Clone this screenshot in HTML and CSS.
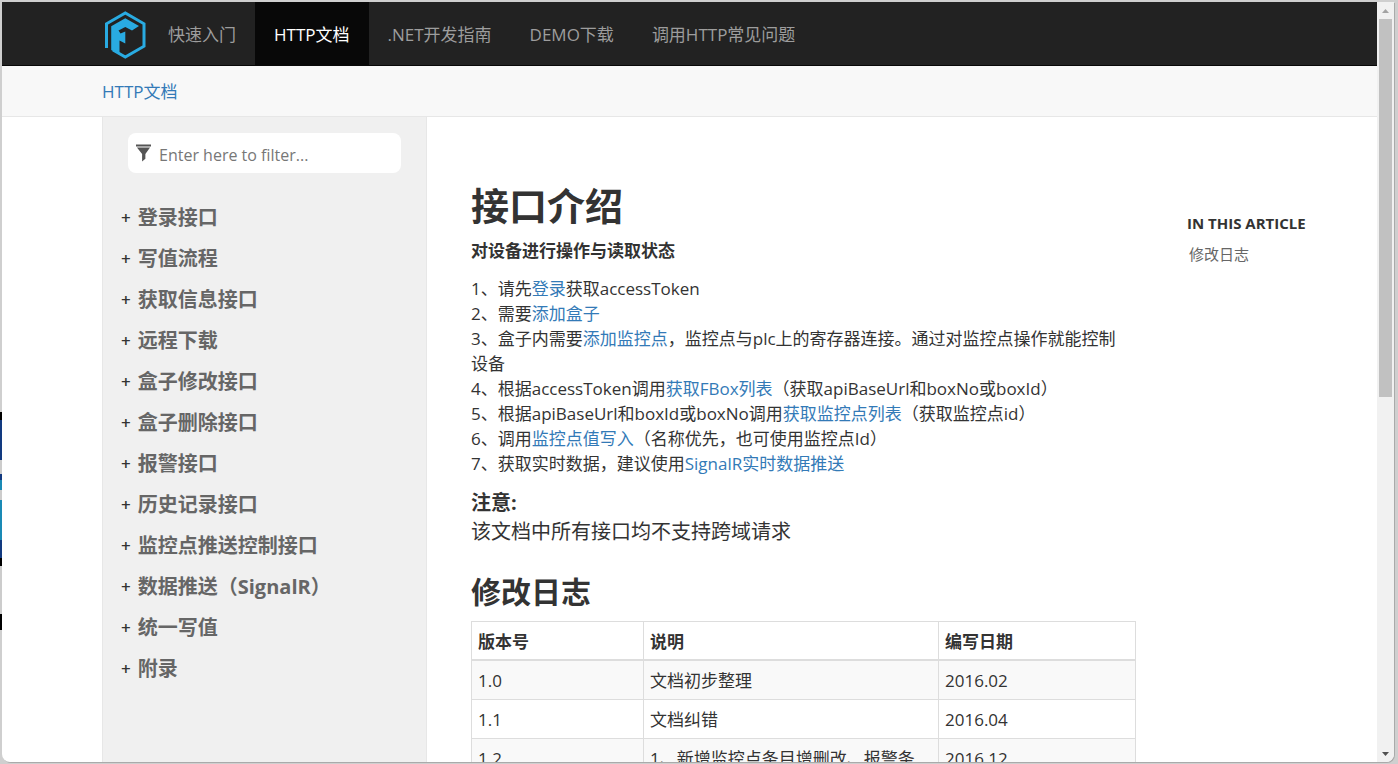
FILE: index.html
```html
<!DOCTYPE html>
<html lang="zh-CN">
<head>
<meta charset="utf-8">
<title>接口介绍</title>
<link rel="stylesheet" href="styles.css">
</head>
<body>
<div class="window">
  <div class="page">
    <header class="navbar">
      <a class="brand" href="#" aria-label="首页">
        <svg class="logo" viewBox="0 0 43 48" aria-hidden="true">
          <path d="M2.500 37V12.800L21.300 2 40 12.800V35.200L21.300 46 9 39" fill="none" stroke="#29abe2" stroke-width="3"/>
          <path d="M7.200 39V15.300L21.300 7.300 35 15 28 19.500 21.300 16 14.500 19.500 16.500 22.500 21.300 20.500V32.500L15.500 29.500V43.500Z" fill="#29abe2"/>
        </svg>
      </a>
      <nav class="menu">
        <a href="#">快速入门</a>
        <a class="active" href="#">HTTP文档</a>
        <a href="#">.NET开发指南</a>
        <a href="#">DEMO下载</a>
        <a href="#">调用HTTP常见问题</a>
      </nav>
    </header>
    <div class="breadcrumb"><a href="#">HTTP文档</a></div>
    <div class="body">
      <aside class="sidebar">
        <label class="filter">
          <svg class="funnel" viewBox="0 0 16 18" aria-label="筛选"><path d="M0 0H16V2H0ZM1 3H15L10 10V15L6.500 18V10Z" fill="#555"/></svg>
          <input type="text" placeholder="Enter here to filter...">
        </label>
        <ul class="toc">
          <li><a href="#">登录接口</a></li>
          <li><a href="#">写值流程</a></li>
          <li><a href="#">获取信息接口</a></li>
          <li><a href="#">远程下载</a></li>
          <li><a href="#">盒子修改接口</a></li>
          <li><a href="#">盒子删除接口</a></li>
          <li><a href="#">报警接口</a></li>
          <li><a href="#">历史记录接口</a></li>
          <li><a href="#">监控点推送控制接口</a></li>
          <li><a href="#">数据推送（SignalR）</a></li>
          <li><a href="#">统一写值</a></li>
          <li><a href="#">附录</a></li>
        </ul>
      </aside>
      <main class="article">
        <h1>接口介绍</h1>
        <h5>对设备进行操作与读取状态</h5>
        <ol class="steps">
          <li>1、请先<a href="#">登录</a>获取accessToken</li>
          <li>2、需要<a href="#">添加盒子</a></li>
          <li>3、盒子内需要<a href="#">添加监控点</a>，监控点与plc上的寄存器连接。通过对监控点操作就能控制<span class="term">设备</span></li>
          <li>4、根据accessToken调用<a href="#">获取FBox列表</a>（获取apiBaseUrl和boxNo或boxId）</li>
          <li>5、根据apiBaseUrl和boxId或boxNo调用<a href="#">获取监控点列表</a>（获取监控点id）</li>
          <li>6、调用<a href="#">监控点值写入</a>（名称优先，也可使用监控点Id）</li>
          <li>7、获取实时数据，建议使用<a href="#">SignalR实时数据推送</a></li>
        </ol>
        <div class="note"><strong>注意:</strong><br>该文档中所有接口均不支持跨域请求</div>
        <h2>修改日志</h2>
        <table>
          <colgroup><col class="version"><col><col class="date"></colgroup>
          <thead><tr><th>版本号</th><th>说明</th><th>编写日期</th></tr></thead>
          <tbody>
            <tr><td>1.0</td><td>文档初步整理</td><td>2016.02</td></tr>
            <tr><td>1.1</td><td>文档纠错</td><td>2016.04</td></tr>
            <tr><td>1.2</td><td>1、新增监控点条目增删改、报警条</td><td>2016.12</td></tr>
          </tbody>
        </table>
      </main>
      <aside class="affix">
        <h6>IN THIS ARTICLE</h6>
        <a href="#">修改日志</a>
      </aside>
    </div>
  </div>
  <div class="scrollbar" aria-hidden="true">
    <svg viewBox="0 0 17 17"><path d="M5 11H12L8.500 7Z" fill="#a3a3a3"/></svg>
    <div class="track"><div class="thumb"></div></div>
    <svg viewBox="0 0 17 17"><path d="M5 7H12L8.500 11Z" fill="#505050"/></svg>
  </div>
</div>
</body>
</html>
```
FILE: styles.css
```css
* { box-sizing: border-box; }

body {
  margin: 0;
  height: 100vh;
  overflow: hidden;
  display: flex;
  padding: 2px 4px 2px 2px;
  background:
    linear-gradient(#000 0 8px, #123a80 8px 48px, #ccc 48px 62px, #123a80 62px 68px, #1a8ab5 68px 78px, #ccc 78px 88px, #1a8ab5 88px 128px, #123a80 128px 146px, #000 146px 154px, #ccc 154px 202px, #000 202px 218px) 0 412px / 2px 218px no-repeat,
    #cfcfcf;
  color: #333;
  font: 17px/25px "Open Sans", "Noto Sans CJK SC", sans-serif;
}

a { color: #337ab7; text-decoration: none; }

.window {
  flex: 1;
  min-width: 0;
  display: flex;
  overflow: hidden;
  background: #fff;
  border-radius: 0 0 8px 8px;
  box-shadow: 1px 1px 0 #aaa;
}

.page { flex: 1; min-width: 0; display: flex; flex-direction: column; }

.navbar {
  flex: none;
  display: flex;
  height: 64px;
  padding-left: 102px;
  background: #222;
  border-bottom: 1px solid #080808;
}

.brand { display: flex; align-items: center; padding: 2px 2px 0 0; }
.logo { width: 43px; height: 48px; }
.menu { display: flex; }
.menu a { padding: 0 19px; line-height: 65px; color: #9d9d9d; white-space: nowrap; }
.menu a.active { background: #080808; color: #fff; }

.breadcrumb {
  flex: none;
  padding: 13px 100px 12px;
  background: #f8f8f8;
  border-bottom: 1px solid #e7e7e7;
}

.body {
  flex: 1;
  min-height: 0;
  display: grid;
  grid-template-columns: 325px minmax(0, 1fr) 190px;
  padding-left: 100px;
}

.sidebar {
  padding: 16px 25px 0;
  background: #f0f0f0;
  border: solid #e7e7e7;
  border-width: 0 1px;
}

.filter {
  display: flex;
  align-items: center;
  gap: 8px;
  height: 40px;
  padding: 0 8px;
  background: #fff;
  border-radius: 8px;
}

.funnel { width: 15px; height: 18px; }

.filter input {
  flex: 1;
  min-width: 0;
  padding: 4px 0 0;
  border: 0;
  outline: 0;
  background: none;
  font: inherit;
  font-size: 16px;
}

.filter input::placeholder { color: #777; opacity: 1; }

.toc {
  margin: 24px 0 0 -7px;
  padding: 0;
  list-style: none;
  line-height: 41px;
}

.toc li { display: flex; gap: 7px; }
.toc li::before { content: "+"; font-weight: 600; }
.toc a { color: #666; font-size: 20px; font-weight: 700; white-space: nowrap; }

.article { padding: 63px 51px 0 44px; overflow: hidden; }

h1 { margin: 0; font-size: 38px; line-height: 50px; }
h5 { margin: 9px 0 13px; font-size: 17px; line-height: 24px; }
.steps { margin: 0; padding: 0; list-style: none; }
.term { display: inline-block; }
.note { margin-top: 12px; font-size: 20px; line-height: 29px; }
h2 { margin: 25px 0 8px; font-size: 30px; line-height: 42px; }

table { width: 100%; table-layout: fixed; border-collapse: collapse; }
.version { width: 172px; }
.date { width: 197px; }
th, td { padding: 8px 7px 6px 6px; border: 1px solid #ddd; text-align: left; line-height: 24px; white-space: nowrap; }
thead th { border-bottom-width: 2px; line-height: 23px; }
tbody tr:nth-child(odd) { background: #f9f9f9; }

.affix { padding-top: 95px; }
.affix h6 { margin: 0 0 10px; font-size: 15px; line-height: 22px; }
.affix a { display: block; padding-left: 2px; color: #666; font-size: 15px; line-height: 20px; }

.scrollbar { flex: none; width: 17px; display: flex; flex-direction: column; background: #f1f1f1; }
.scrollbar svg { width: 17px; height: 17px; }
.track { flex: 1; padding: 0 2px; }
.thumb { height: 52%; background: #c1c1c1; }
```
